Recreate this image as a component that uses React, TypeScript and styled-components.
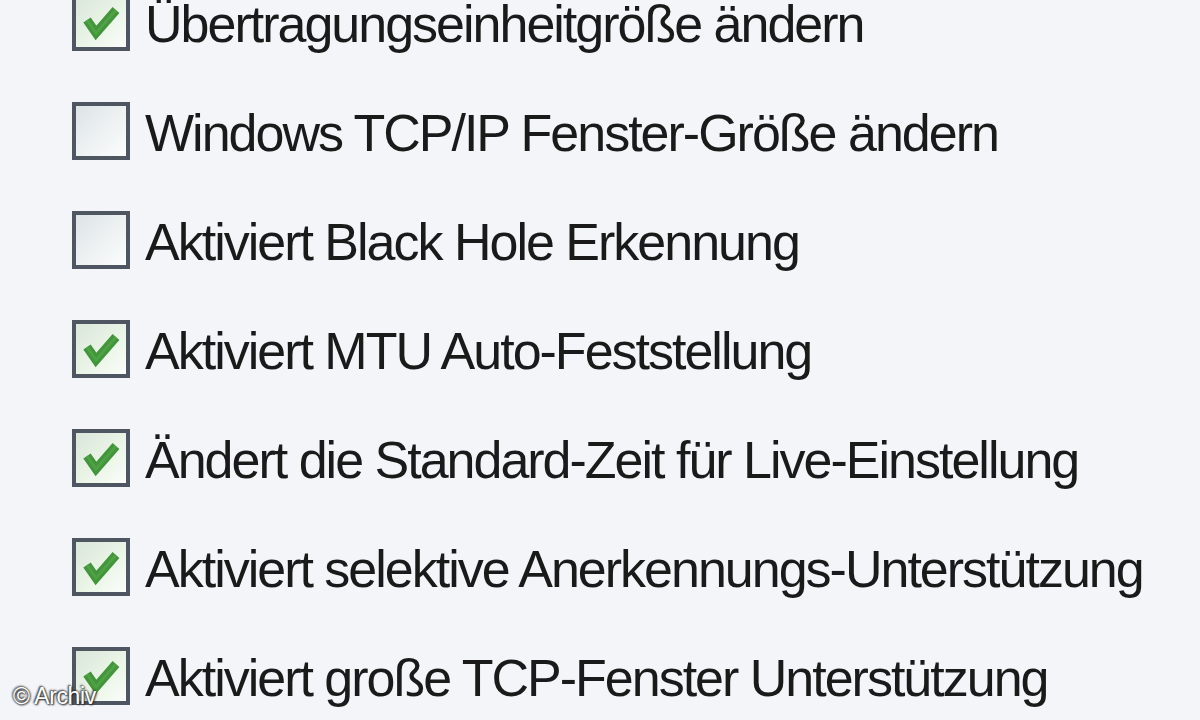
import React from 'react'
import styled, { createGlobalStyle } from 'styled-components'

const GlobalStyle = createGlobalStyle`
  html, body {
    margin: 0;
    padding: 0;
    background: #f3f5f9;
    overflow: hidden;
  }
`

const Page = styled.div`
  position: relative;
  width: 1200px;
  height: 720px;
  overflow: hidden;
  background: #f3f5f9;
  font-family: 'Liberation Sans', Arial, sans-serif;
`

const List = styled.div`
  display: flex;
  flex-direction: column;
  gap: 51px;
  margin-top: -7px;
  padding-left: 72px;
`

const Row = styled.label`
  display: flex;
  align-items: center;
  gap: 15px;
  height: 58px;
`

const Box = styled.div<{ $checked: boolean }>`
  flex: none;
  width: 50px;
  height: 50px;
  border: 4px solid #4e5661;
  background: ${({ $checked }) =>
    $checked
      ? 'linear-gradient(135deg, #dbe6dc 0%, #eaf5e7 55%, #fbfdfa 100%)'
      : 'linear-gradient(135deg, #dde3e6 0%, #eef2f3 55%, #fcfdfd 100%)'};
  display: flex;
  align-items: center;
  justify-content: center;
`

const Label = styled.span`
  font-size: 52px;
  color: #1a1a1a;
  letter-spacing: -2px;
  white-space: nowrap;
  line-height: 1;
  padding-top: 3px;
`

const Watermark = styled.div`
  position: absolute;
  left: 13px;
  bottom: 10px;
  font-family: 'Liberation Sans', Arial, sans-serif;
  font-size: 23px;
  color: #ffffff;
  letter-spacing: -0.4px;
  text-shadow: 0 0 2px #333, 1px 1px 2px #222, -1px -1px 2px #444;
`

const Check = () => (
  <svg width="50" height="50" viewBox="0 0 50 50">
    <polyline
      points="11,23 20,36 40,13"
      fill="none"
      stroke="#42953a"
      strokeWidth="9"
      strokeLinecap="butt"
      strokeLinejoin="miter"
    />
    <polyline
      points="11,23 20,36 40,13"
      fill="none"
      stroke="#5aae50"
      strokeWidth="3"
      opacity="0.5"
    />
  </svg>
)

const items: { text: string; checked: boolean }[] = [
  { text: 'Übertragungseinheitgröße ändern', checked: true },
  { text: 'Windows TCP/IP Fenster-Größe ändern', checked: false },
  { text: 'Aktiviert Black Hole Erkennung', checked: false },
  { text: 'Aktiviert MTU Auto-Feststellung', checked: true },
  { text: 'Ändert die Standard-Zeit für Live-Einstellung', checked: true },
  { text: 'Aktiviert selektive Anerkennungs-Unterstützung', checked: true },
  { text: 'Aktiviert große TCP-Fenster Unterstützung', checked: true },
]

export default function App() {
  return (
    <Page>
      <GlobalStyle />
      <List>
        {items.map((item) => (
          <Row key={item.text}>
            <Box $checked={item.checked}>{item.checked && <Check />}</Box>
            <Label>{item.text}</Label>
          </Row>
        ))}
      </List>
      <Watermark>© Archiv</Watermark>
    </Page>
  )
}
